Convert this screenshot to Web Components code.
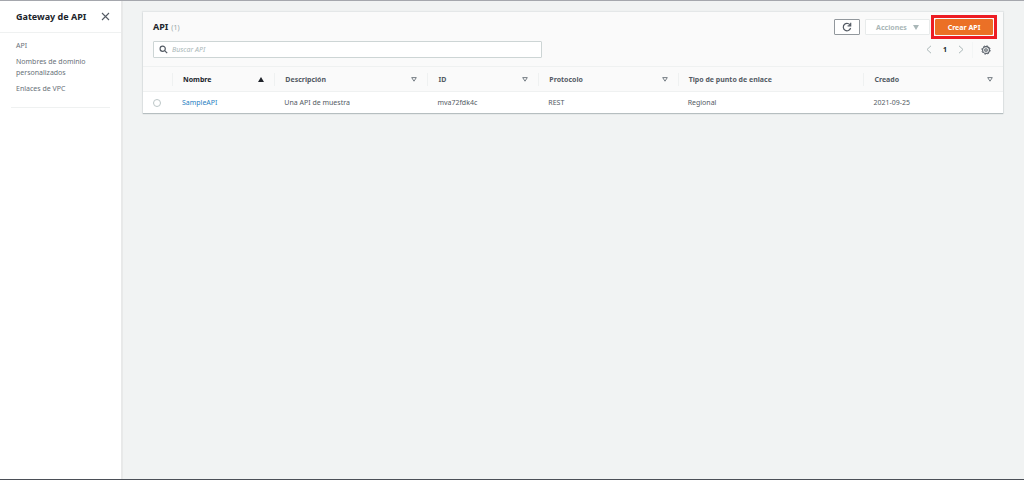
<!DOCTYPE html>
<html lang="es">
<head>
<meta charset="utf-8">
<meta name="viewport" content="width=device-width, initial-scale=1">
<title>Gateway de API</title>
<style>
  html, body { margin: 0; height: 100%; }
  body {
    font: 7px/11px "Noto Sans", "Open Sans", sans-serif;
    color: #545b64;
    background: #f1f3f3;
    --line: #eff1f1;
    --muted: #aab7b8;
    --dark: #20242b;
    --link: #1f7fc2;
  }
</style>
</head>
<body>
<console-layout>
  <side-nav slot="nav" heading="Gateway de API">
    <nav-link href="#apis">API</nav-link>
    <nav-link href="#dominios">Nombres de dominio personalizados</nav-link>
    <nav-link href="#vpc">Enlaces de VPC</nav-link>
  </side-nav>
  <api-panel>
    <panel-toolbar slot="toolbar" heading="API" count="1"></panel-toolbar>
    <api-table></api-table>
  </api-panel>
</console-layout>

<script>
const define = (name, html, setup) => {
  const template = document.createElement('template');
  template.innerHTML = html;
  customElements.define(name, class extends HTMLElement {
    constructor() {
      super();
      this.attachShadow({ mode: 'open' }).append(template.content.cloneNode(true));
    }
    connectedCallback() { if (setup) setup(this, this.shadowRoot); }
  });
};

define('console-layout', `
  <style>
    :host { display: grid; grid-template-columns: 121px 1fr; min-height: 100vh; box-sizing: border-box;
      border-top: 1px solid #a5a7ad; border-bottom: 1px solid #4b4f57; }
    main { padding: 11px 21px 11px 20px; border-left: 2px solid #e8e9e9; min-width: 0; }
  </style>
  <slot name="nav"></slot>
  <main><slot></slot></main>
`);

define('side-nav', `
  <style>
    :host { display: block; background: #fff; }
    header { display: flex; align-items: center; justify-content: space-between;
      height: 31px; padding: 0 11px 0 16px; border-bottom: 1px solid var(--line); }
    h2 { margin: 0; font-size: 9px; line-height: 16px; font-weight: 700; color: var(--dark); white-space: nowrap; }
    button { border: 0; padding: 0; background: none; width: 9px; height: 9px; color: #545b64; }
    svg { display: block; }
    nav { display: grid; gap: 5px; padding: 7px 16px 13px; }
    hr { margin: 0 11px; border: 0; border-top: 1px solid var(--line); }
  </style>
  <header>
    <h2></h2>
    <button type="button" aria-label="Cerrar"><svg width="9" height="9" viewBox="0 0 9 9" fill="none" stroke="currentColor" stroke-width="1.1"><path d="M1 1l7 7M8 1L1 8"/></svg></button>
  </header>
  <nav><slot></slot></nav>
  <hr>
`, (host, root) => { root.querySelector('h2').textContent = host.getAttribute('heading'); });

define('nav-link', `
  <style>
    :host { display: block; }
    a { color: #687078; text-decoration: none; }
  </style>
  <a><slot></slot></a>
`, (host, root) => { root.querySelector('a').href = host.getAttribute('href'); });

define('api-panel', `
  <style>
    :host { display: block; background: #fff; box-shadow: 0 1px 1px rgba(0,28,36,.2), 0 0 1px 1px rgba(0,28,36,.05); }
  </style>
  <slot name="toolbar"></slot>
  <slot></slot>
`);

define('console-button', `
  <style>
    :host { display: block; }
    button { display: flex; align-items: center; justify-content: center; gap: 6px; box-sizing: border-box;
      width: 100%; height: 16px; margin: 0; padding: 0; border: 1px solid #92989d; border-radius: 1px;
      background: #fff; color: #545b64; font: inherit; font-weight: 700; white-space: nowrap; }
    :host([variant="disabled"]) button { border-color: #e8ebeb; color: var(--muted); }
    :host([variant="primary"]) button { border-color: #eb7026; background: #eb7026; color: #fff; }
    :host([highlighted]) { outline: 3px solid #ed1c24; outline-offset: 1px; }
  </style>
  <button type="button"><slot></slot></button>
`, (host, root) => {
  const button = root.querySelector('button');
  button.disabled = host.getAttribute('variant') === 'disabled';
  if (host.hasAttribute('label')) button.setAttribute('aria-label', host.getAttribute('label'));
});

define('search-box', `
  <style>
    :host { display: flex; align-items: center; gap: 4px; box-sizing: border-box; height: 17px;
      padding: 0 5px; border: 1px solid #cdd5d5; border-radius: 1px; background: #fff; color: #545b64; }
    svg { flex: none; display: block; }
    input { flex: 1; min-width: 0; margin: 0; padding: 0; border: 0; outline: 0; background: none;
      font: inherit; color: var(--dark); }
    input::placeholder { color: var(--muted); font-style: italic; opacity: 1; }
  </style>
  <svg width="9" height="9" viewBox="0 0 9 9" fill="none" stroke="currentColor" stroke-width="1.2"><circle cx="3.7" cy="3.7" r="2.600"/><path d="M5.700 5.700l2.500 2.500"/></svg>
  <input type="text" placeholder="Buscar API" aria-label="Buscar API">
`);

define('page-controls', `
  <style>
    :host { display: flex; align-items: center; }
    button { display: grid; place-items: center; width: 16px; height: 16px; margin: 0; padding: 0; border: 0; background: none;
      font: inherit; font-weight: 700; color: var(--muted); }
    .current { color: var(--dark); }
    .settings { width: 27px; margin-left: 3px; border-left: 1px solid #f3f5f5; color: #545b64; }
    svg { display: block; }
  </style>
  <button type="button" aria-label="Anterior"><svg width="6" height="9" viewBox="0 0 6 9" fill="none" stroke="currentColor"><path d="M5 .8L1 4.5l4 3.7"/></svg></button>
  <button type="button" class="current">1</button>
  <button type="button" aria-label="Siguiente"><svg width="6" height="9" viewBox="0 0 6 9" fill="none" stroke="currentColor"><path d="M1 .8l4 3.7-4 3.7"/></svg></button>
  <button type="button" class="settings" aria-label="Preferencias"><svg width="10" height="10" viewBox="0 0 10 10" fill="none" stroke="currentColor"><circle cx="5" cy="5" r="3.4" stroke-width="1.1"/><circle cx="5" cy="5" r="4.200" stroke-width=".9" stroke-dasharray="1.650 1.650"/><circle cx="5" cy="5" r="1.300" stroke-width="1.1"/></svg></button>
`);

define('panel-toolbar', `
  <style>
    :host { display: grid; gap: 6px; padding: 7px 10px 8px; background: #fafafa; border-bottom: 1px solid var(--line); }
    .row { display: flex; align-items: center; justify-content: space-between; }
    h1 { display: flex; align-items: baseline; gap: 3px; height: 16px; margin: 0;
      font-size: 9px; line-height: 16px; font-weight: 700; color: var(--dark); }
    h1 span { font-size: 7px; font-weight: 400; color: #95a5a6; }
    .actions { display: grid; grid-template-columns: 26px 65px 58px; gap: 5px; }
    search-box { width: 46.3%; }
    page-controls { margin-right: -6px; }
    svg { display: block; }
  </style>
  <div class="row">
    <h1></h1>
    <div class="actions">
      <console-button label="Actualizar"><svg width="10" height="10" viewBox="0 0 10 10" fill="none" stroke="currentColor" stroke-width="1.200"><path d="M8.400 3.600A3.700 3.700 0 1 0 8.600 6M8.700.8v3.100H5.600"/></svg></console-button>
      <console-button variant="disabled">Acciones<svg width="6" height="5" viewBox="0 0 6 5" fill="currentColor"><path d="M0 0h6L3 5z"/></svg></console-button>
      <console-button variant="primary" highlighted>Crear API</console-button>
    </div>
  </div>
  <div class="row">
    <search-box></search-box>
    <page-controls></page-controls>
  </div>
`, (host, root) => {
  const count = document.createElement('span');
  count.textContent = `(${host.getAttribute('count')})`;
  root.querySelector('h1').replaceChildren(host.getAttribute('heading') + ' ', count);
});

define('sort-header', `
  <style>
    :host { display: flex; align-items: center; justify-content: space-between; height: 13px;
      padding: 0 10px; border-left: 1px solid var(--line); }
    :host([sorted]) { color: var(--dark); }
    svg { display: none; }
    :host([sorted]) .asc, :host([sortable]) .none { display: block; }
  </style>
  <span><slot></slot></span>
  <svg class="asc" width="6" height="5" viewBox="0 0 6 5" fill="currentColor"><path d="M3 0l3 5H0z"/></svg>
  <svg class="none" width="6" height="5" viewBox="0 0 6 5" fill="none" stroke="#687078" stroke-width=".9"><path d="M.7.6h4.600L3 4.200z"/></svg>
`);

define('api-table', `
  <style>
    :host { display: block; }
    table { width: 100%; table-layout: fixed; border-collapse: separate; border-spacing: 0; text-align: left; }
    th { height: 24px; padding: 0; background: #fafafa; border-bottom: 1px solid var(--line); font-weight: 700; }
    td { height: 21px; padding: 0 10px; }
    .select { width: 29px; }
    a { color: var(--link); text-decoration: none; }
    input { appearance: none; display: block; box-sizing: border-box; width: 8px; height: 8px; margin: 0;
      border: 1px solid #bcc6c7; border-radius: 50%; background: #fff; }
  </style>
  <table>
    <colgroup>
      <col class="select"><col style="width:11.9%"><col style="width:17.8%"><col style="width:12.9%"><col style="width:16.2%"><col style="width:21.6%"><col>
    </colgroup>
    <thead><tr>
      <th aria-label="Seleccionar"></th>
      <th scope="col"><sort-header sorted>Nombre</sort-header></th>
      <th scope="col"><sort-header sortable>Descripción</sort-header></th>
      <th scope="col"><sort-header sortable>ID</sort-header></th>
      <th scope="col"><sort-header sortable>Protocolo</sort-header></th>
      <th scope="col"><sort-header>Tipo de punto de enlace</sort-header></th>
      <th scope="col"><sort-header sortable>Creado</sort-header></th>
    </tr></thead>
    <tbody><tr>
      <td><input type="radio" name="api" aria-label="SampleAPI"></td>
      <td><a href="#SampleAPI">SampleAPI</a></td>
      <td>Una API de muestra</td>
      <td>mva72fdk4c</td>
      <td>REST</td>
      <td>Regional</td>
      <td>2021-09-25</td>
    </tr></tbody>
  </table>
`);
</script>
</body>
</html>
